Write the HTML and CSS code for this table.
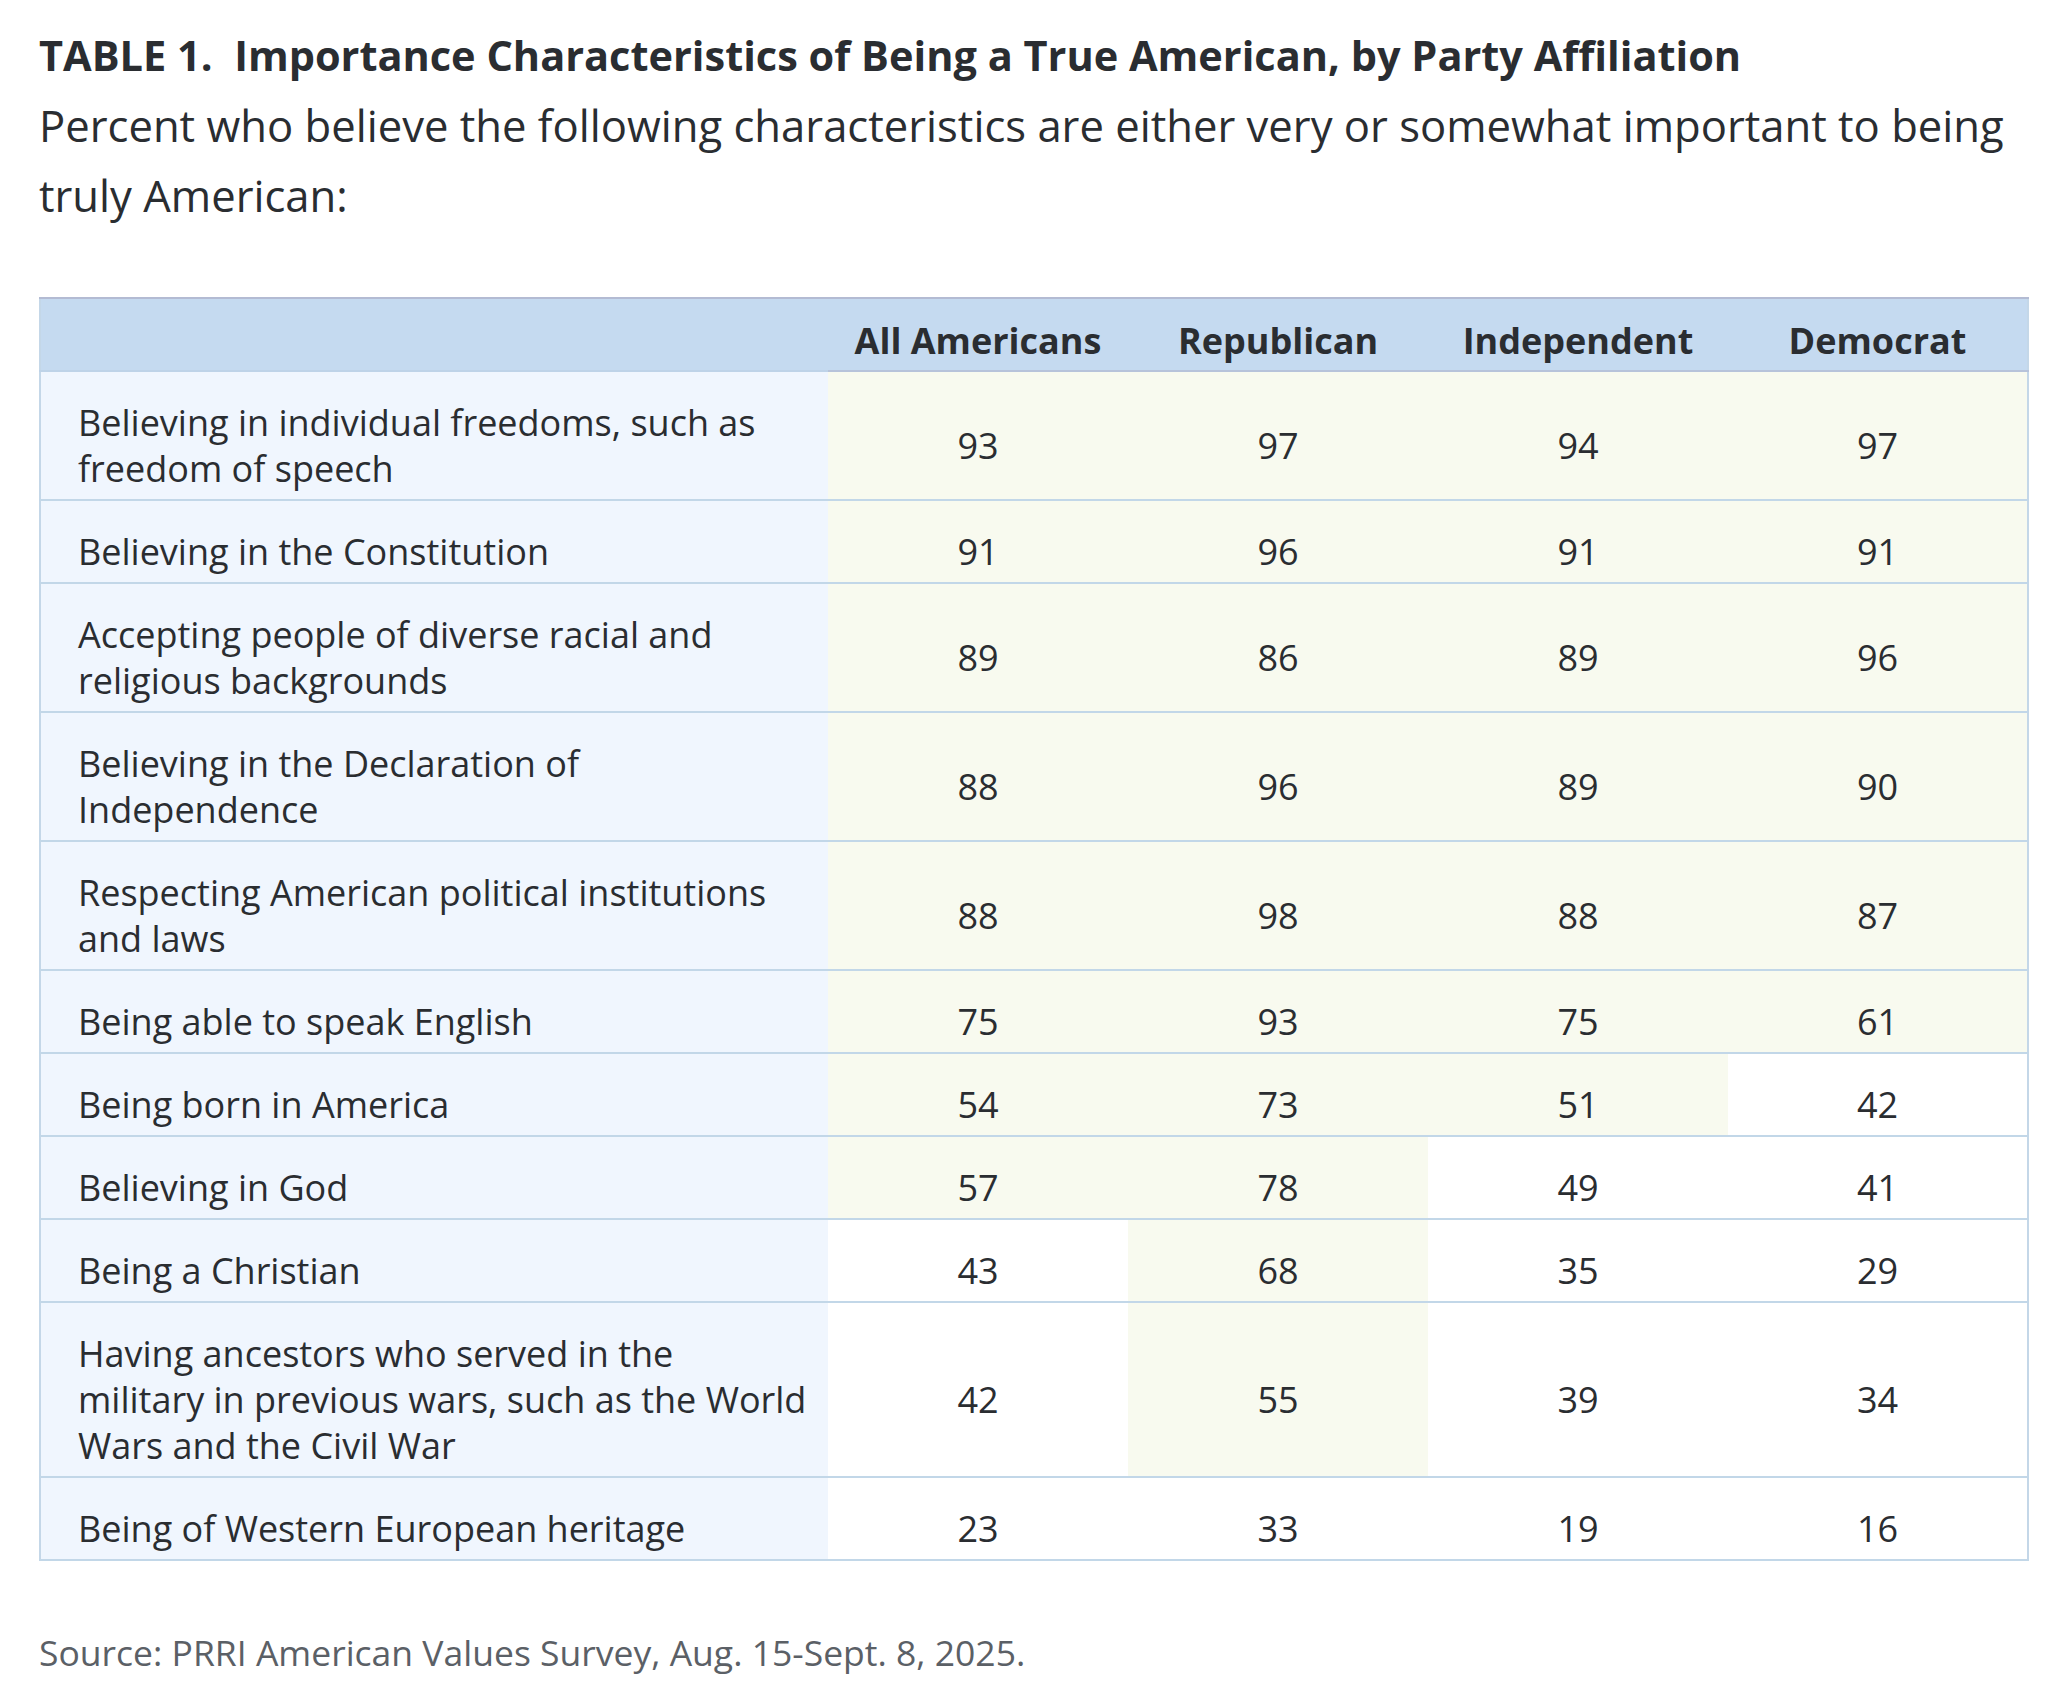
FILE: index.html
```html
<!DOCTYPE html>
<html lang="en">
<head>
<meta charset="utf-8">
<title>Table 1</title>
<link rel="stylesheet" href="styles.css">
</head>
<body>
<main class="page">
  <h1 class="title">TABLE 1.&nbsp; Importance Characteristics of Being a True American, by Party Affiliation</h1>
  <p class="subtitle">Percent who believe the following characteristics are either very or somewhat important to being truly American:</p>
  <table class="data">
    <colgroup>
      <col class="c-label">
      <col class="c-num">
      <col class="c-num">
      <col class="c-num">
      <col class="c-num">
    </colgroup>
    <thead>
      <tr>
        <th class="label-h"></th>
        <th>All Americans</th>
        <th>Republican</th>
        <th>Independent</th>
        <th>Democrat</th>
      </tr>
    </thead>
    <tbody>
      <tr><td class="label">Believing in individual freedoms, such as<br>freedom of speech</td><td class="hi">93</td><td class="hi">97</td><td class="hi">94</td><td class="hi">97</td></tr>
      <tr><td class="label">Believing in the Constitution</td><td class="hi">91</td><td class="hi">96</td><td class="hi">91</td><td class="hi">91</td></tr>
      <tr><td class="label">Accepting people of diverse racial and<br>religious backgrounds</td><td class="hi">89</td><td class="hi">86</td><td class="hi">89</td><td class="hi">96</td></tr>
      <tr><td class="label">Believing in the Declaration of<br>Independence</td><td class="hi">88</td><td class="hi">96</td><td class="hi">89</td><td class="hi">90</td></tr>
      <tr><td class="label">Respecting American political institutions<br>and laws</td><td class="hi">88</td><td class="hi">98</td><td class="hi">88</td><td class="hi">87</td></tr>
      <tr><td class="label">Being able to speak English</td><td class="hi">75</td><td class="hi">93</td><td class="hi">75</td><td class="hi">61</td></tr>
      <tr><td class="label">Being born in America</td><td class="hi">54</td><td class="hi">73</td><td class="hi">51</td><td>42</td></tr>
      <tr><td class="label">Believing in God</td><td class="hi">57</td><td class="hi">78</td><td>49</td><td>41</td></tr>
      <tr><td class="label">Being a Christian</td><td>43</td><td class="hi">68</td><td>35</td><td>29</td></tr>
      <tr><td class="label">Having ancestors who served in the<br>military in previous wars, such as the World<br>Wars and the Civil War</td><td>42</td><td class="hi">55</td><td>39</td><td>34</td></tr>
      <tr><td class="label">Being of Western European heritage</td><td>23</td><td>33</td><td>19</td><td>16</td></tr>
    </tbody>
  </table>
  <p class="source">Source: PRRI American Values Survey, Aug. 15-Sept. 8, 2025.</p>
</main>
</body>
</html>
```

FILE: styles.css
```css
html, body {
  margin: 0;
  padding: 0;
  background: #ffffff;
}

body {
  font-family: "Open Sans", "Noto Sans", "Liberation Sans", sans-serif;
  color: #2a2d31;
}

.page {
  padding: 30px 0 0 39px;
}

.title {
  margin: 0;
  font-size: 41.5px;
  line-height: 50px;
  font-weight: 700;
  color: #2a2d31;
}

.subtitle {
  margin: 10px 0 0 0;
  width: 1990px;
  font-size: 43.6px;
  line-height: 70px;
  font-weight: 400;
  color: #2a2d31;
}

.data {
  margin-top: 67px;
  width: 1988px;
  table-layout: fixed;
  border-collapse: collapse;
  border: 2px solid #c4d7e8;
  font-size: 36px;
  line-height: 46px;
}

.c-label { width: 788px; }
.c-num { width: 300px; }

.data thead th {
  background: #c5daf0;
  border-top: 2px solid #b3bbd3;
  border-bottom: 2px solid #b7c3da;
  font-size: 36px;
  line-height: 46px;
  font-weight: 700;
  text-align: center;
  padding: 19px 0 6px 0;
  color: #2a2d31;
  white-space: nowrap;
}

.data thead th.label-h {
  border-bottom-color: #bed3e8;
}

.data td {
  padding: 28px 0 7px 0;
  text-align: center;
  vertical-align: middle;
  border-bottom: 2px solid #c2d7e8;
  background: #ffffff;
  white-space: nowrap;
}

.data td.label {
  text-align: left;
  padding-left: 37px;
  background: #f0f6fe;
}

.data td.hi {
  background: #f8faef;
}

.source {
  margin: 68px 0 0 0;
  font-size: 35.5px;
  line-height: 46px;
  color: #5b6066;
}
```
